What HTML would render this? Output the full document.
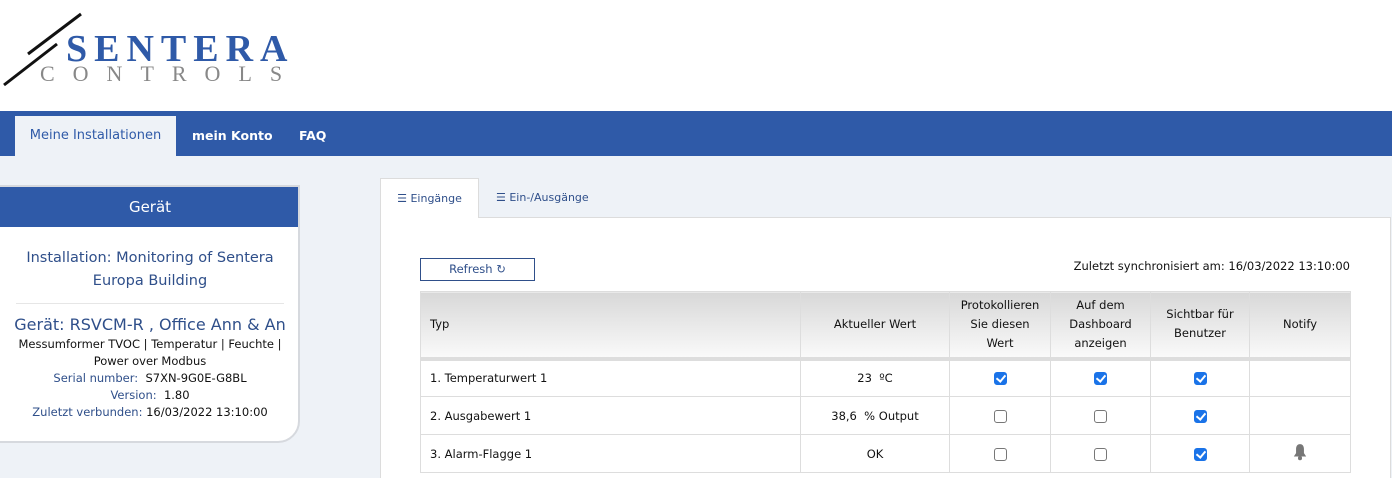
<!DOCTYPE html>
<html style="overflow:hidden;height:478px"><head><meta charset="utf-8"><style>
*{box-sizing:border-box;margin:0;padding:0}
body{width:1392px;height:478px;overflow:hidden;background:#eef2f7;font-family:"DejaVu Sans","Liberation Sans",sans-serif;font-size:12px;color:#111;position:relative}
.top{position:absolute;left:0;top:0;width:1392px;height:111px;background:#fff}
.nav{position:absolute;left:0;top:111px;width:1392px;height:45px;background:#2f5aa8}
.nav div{position:absolute;top:17px;color:#fff;font-weight:bold;font-size:12.5px}
.nav .act{left:15px;top:5px;width:161px;height:40px;background:#eef2f7;color:#2f5aa8;font-weight:normal;text-align:center;line-height:40px;font-size:13px}
.card{position:absolute;left:-10px;top:185px;width:310px;height:258px;background:#fff;border:2px solid #d6d9de;border-radius:0 0 22px 0;overflow:hidden;text-align:center;color:#2f4f8a}
.card .h{height:40px;background:#2f5aa8;color:#fff;font-size:15px;line-height:40px;padding-left:10px}
.tab{position:absolute;top:178px;height:40px;line-height:40px;font-size:11px;color:#2f4f8a}
.panel{position:absolute;left:380px;top:217px;width:1011px;height:261px;background:#fff;border:1px solid #dcdcdc;border-bottom:none}
.tw{position:absolute;left:420px;top:291px;width:931px;height:187px;overflow:hidden}
table{border-collapse:collapse;font-size:11.5px}
td,th{border:1px solid #ddd;height:38px}
th{height:67px;font-weight:normal;background:linear-gradient(#d8d8d8,#fafafa);text-align:center;line-height:19px;border-bottom:4px solid #ddd}
td{text-align:center}
.cb{display:inline-block;width:13px;height:13px;border:1px solid #777;border-radius:3px;vertical-align:middle}
.cb.on{background:#1a73e8;border-color:#1a73e8;position:relative}
.cb.on:after{content:"";position:absolute;left:3px;top:0px;width:4px;height:7px;border:solid #fff;border-width:0 2px 2px 0;transform:rotate(40deg)}
</style></head><body>
<div class="top">
<svg width="300" height="100" style="position:absolute;left:0;top:0">
<line x1="4" y1="85" x2="57" y2="44" stroke="#111" stroke-width="3"/>
<line x1="28" y1="54" x2="81" y2="14" stroke="#111" stroke-width="3"/>
<text x="66" y="61" font-family="Liberation Serif" font-weight="bold" font-size="38" fill="#2f5aa8" letter-spacing="7">SENTERA</text>
<text x="40" y="81" font-family="Liberation Serif" font-size="22" fill="#888" letter-spacing="18">CONTROLS</text>
</svg></div>
<div class="nav"><div class="act">Meine Installationen</div><div style="left:192px">mein Konto</div><div style="left:299px">FAQ</div></div>
<div class="card"><div class="h">Gerät</div>
<div style="margin-top:20px;font-size:14.5px;line-height:23px;padding-left:10px">Installation: Monitoring of Sentera<br>Europa Building</div>
<div style="margin:10px 14px 0 24px;border-top:1px solid #e6e6e6"></div>
<div style="margin-top:11px;font-size:16px;padding-left:10px">Gerät: RSVCM-R , Office Ann &amp; An</div>
<div style="font-size:11.5px;line-height:17px;padding-left:10px;margin-top:2px"><span style="color:#111">Messumformer TVOC | Temperatur | Feuchte |<br>Power over Modbus</span><br>Serial number: &nbsp;<span style="color:#111">S7XN-9G0E-G8BL</span><br>Version: &nbsp;<span style="color:#111">1.80</span><br>Zuletzt verbunden: <span style="color:#111">16/03/2022 13:10:00</span></div>
</div>
<div class="panel"></div>
<div class="tab" style="left:380px;width:99px;background:#fff;border:1px solid #dcdcdc;border-bottom:none;text-align:center">☰ Eingänge</div>
<div class="tab" style="left:496px">☰ Ein-/Ausgänge</div>
<div style="position:absolute;left:420px;top:258px;width:115px;height:23px;border:1px solid #2f4f8a;color:#2f4f8a;text-align:center;line-height:21px;font-size:11.5px">Refresh ↻</div>
<div style="position:absolute;right:42px;top:259px;font-size:11.5px">Zuletzt synchronisiert am: 16/03/2022 13:10:00</div>
<div class="tw"><table>
<tr><th style="width:380px;text-align:left;padding-left:9px">Typ</th><th style="width:149px">Aktueller Wert</th><th style="width:101px">Protokollieren<br>Sie diesen<br>Wert</th><th style="width:100px">Auf dem<br>Dashboard<br>anzeigen</th><th style="width:99px">Sichtbar für<br>Benutzer</th><th style="width:101px">Notify</th></tr>
<tr><td style="text-align:left;padding-left:9px">1. Temperaturwert 1</td><td>23 &nbsp;ºC</td><td><span class="cb on"></span></td><td><span class="cb on"></span></td><td><span class="cb on"></span></td><td></td></tr>
<tr><td style="text-align:left;padding-left:9px">2. Ausgabewert 1</td><td>38,6 &nbsp;% Output</td><td><span class="cb"></span></td><td><span class="cb"></span></td><td><span class="cb on"></span></td><td></td></tr>
<tr><td style="text-align:left;padding-left:9px">3. Alarm-Flagge 1</td><td>OK</td><td><span class="cb"></span></td><td><span class="cb"></span></td><td><span class="cb on"></span></td><td><svg width="16" height="18" viewBox="0 0 14 16"><path d="M7 1C4.5 1 3.5 3 3.5 5.5V9L1.5 12H12.5L10.5 9V5.5C10.5 3 9.5 1 7 1Z" fill="#777"/><circle cx="7" cy="13.5" r="1.8" fill="#777"/></svg></td></tr>
</table></div>
</body></html>
